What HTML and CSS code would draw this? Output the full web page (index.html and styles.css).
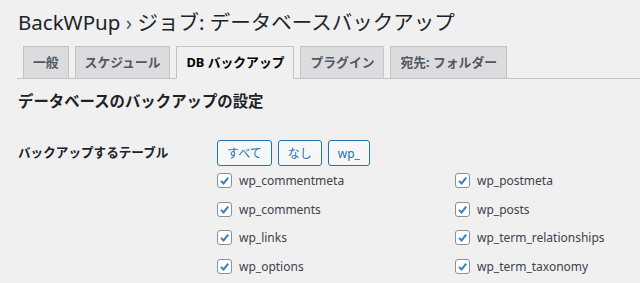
FILE: index.html
```html
<!DOCTYPE html>
<html lang="ja">

<head>
    <meta charset="UTF-8">
    <title>BackWPup</title>
    <link rel="stylesheet" href="styles.css">
</head>

<body>
    <div class="wrap">
        <h1 class="page-title">BackWPup <span class="sep">›</span> ジョブ: データベースバックアップ</h1>

        <nav class="nav-tabs">
            <a class="nav-tab">一般</a>
            <a class="nav-tab">スケジュール</a>
            <a class="nav-tab active">DB バックアップ</a>
            <a class="nav-tab">プラグイン</a>
            <a class="nav-tab">宛先: フォルダー</a>
        </nav>

        <h2 class="section-title">データベースのバックアップの設定</h2>

        <div class="form-row">
            <div class="row-label">バックアップするテーブル</div>
            <div class="row-field">
                <div class="button-group">
                    <button class="button">すべて</button>
                    <button class="button">なし</button>
                    <button class="button">wp_</button>
                </div>
                <div class="table-list">
                    <label class="table-item"><span class="box"><svg viewBox="0 0 14 14" width="14" height="14"><path d="M3.2 7.4 L6 10.1 L11 3.9" /></svg></span>wp_commentmeta</label>
                    <label class="table-item"><span class="box"><svg viewBox="0 0 14 14" width="14" height="14"><path d="M3.2 7.4 L6 10.1 L11 3.9" /></svg></span>wp_postmeta</label>
                    <label class="table-item"><span class="box"><svg viewBox="0 0 14 14" width="14" height="14"><path d="M3.2 7.4 L6 10.1 L11 3.9" /></svg></span>wp_comments</label>
                    <label class="table-item"><span class="box"><svg viewBox="0 0 14 14" width="14" height="14"><path d="M3.2 7.4 L6 10.1 L11 3.9" /></svg></span>wp_posts</label>
                    <label class="table-item"><span class="box"><svg viewBox="0 0 14 14" width="14" height="14"><path d="M3.2 7.4 L6 10.1 L11 3.9" /></svg></span>wp_links</label>
                    <label class="table-item"><span class="box"><svg viewBox="0 0 14 14" width="14" height="14"><path d="M3.2 7.4 L6 10.1 L11 3.9" /></svg></span>wp_term_relationships</label>
                    <label class="table-item"><span class="box"><svg viewBox="0 0 14 14" width="14" height="14"><path d="M3.2 7.4 L6 10.1 L11 3.9" /></svg></span>wp_options</label>
                    <label class="table-item"><span class="box"><svg viewBox="0 0 14 14" width="14" height="14"><path d="M3.2 7.4 L6 10.1 L11 3.9" /></svg></span>wp_term_taxonomy</label>
                </div>
            </div>
        </div>
    </div>
</body>

</html>
```

FILE: styles.css
```css
html,
body {
    margin: 0;
    background: #f0f0f1;
    color: #1d2327;
    font-family: "Noto Sans", "Noto Sans CJK JP", sans-serif;
}

.wrap {
    padding-left: 17px;
}

.page-title {
    margin: 8px 0 0 1px;
    font-size: 20.5px;
    font-weight: 400;
    line-height: 28px;
    color: #1d2327;
}

.page-title .sep {
    color: #50575e;
}

/* tabs sit on the grey line */
.nav-tabs {
    display: flex;
    gap: 6px;
    margin-top: 10px;
    padding-left: 6px;
    border-bottom: 1px solid #c3c4c7;
}

.nav-tab {
    margin-bottom: -1px;
    padding: 0 9px;
    line-height: 31px;
    font-size: 12.8px;
    font-weight: 700;
    color: #50575e;
    background: #dcdcde;
    border: 1px solid #c3c4c7;
    white-space: nowrap;
}

.nav-tab.active {
    color: #000;
    background: #f0f0f1;
    border-bottom-color: #f0f0f1;
}

.section-title {
    margin: 12px 0 0 1px;
    font-size: 15.4px;
    font-weight: 700;
    line-height: 22px;
}

.form-row {
    display: grid;
    grid-template-columns: 200px 1fr;
    margin-top: 27px;
}

.row-label {
    padding-left: 1px;
    font-size: 12.6px;
    font-weight: 700;
    line-height: 26px;
}

.button-group {
    display: flex;
    gap: 6px;
}

.button {
    height: 26px;
    padding: 0 9px;
    font-family: inherit;
    font-size: 12px;
    color: #2271b1;
    background: #f6f7f7;
    border: 1px solid #2271b1;
    border-radius: 3px;
}

.table-list {
    display: grid;
    grid-template-columns: 238px 1fr;
    grid-auto-rows: 28.7px;
}

.table-item {
    display: flex;
    align-items: center;
    gap: 7px;
    font-size: 12px;
    color: #3c434a;
}

.box {
    display: flex;
    width: 13px;
    height: 13px;
    background: #fff;
    border: 1px solid #8c8f94;
    border-radius: 3px;
}

.box svg {
    width: 13px;
    height: 13px;
    fill: none;
    stroke: #3582c4;
    stroke-width: 2.2;
}
```
